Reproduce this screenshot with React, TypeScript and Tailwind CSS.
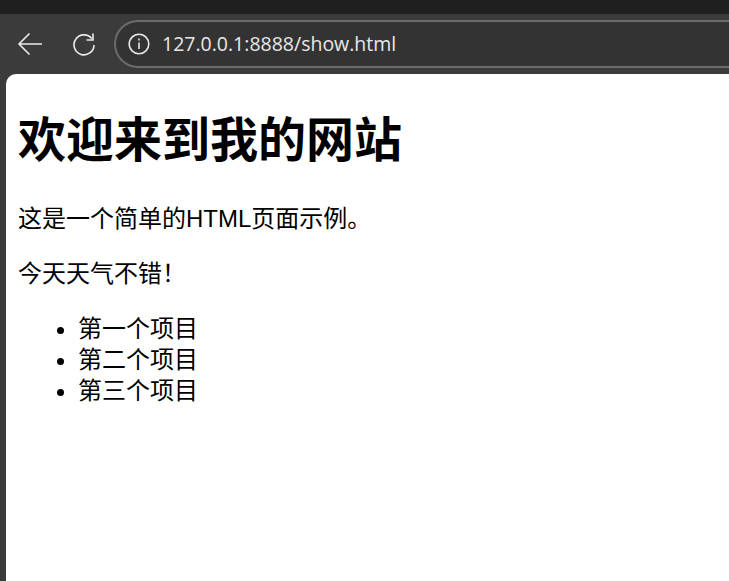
import React from 'react';

const cjk = "font-['Liberation_Sans','Noto_Sans_CJK_SC',sans-serif]";

const BackIcon = () => (
  <svg width="26" height="24" viewBox="0 0 26 24" fill="none" stroke="#ebebeb" strokeWidth="1.6">
    <path d="M25 12H2M12.5 1.5 2 12l10.5 10.5" />
  </svg>
);

const ReloadIcon = () => (
  <svg width="24" height="24" viewBox="0 0 24 24" fill="none" stroke="#ebebeb" strokeWidth="1.6">
    <path d="M19.8 6.6A10 10 0 1 0 22 13" />
    <path d="M21 1.5v6.5h-6.5" />
  </svg>
);

const InfoIcon = () => (
  <svg width="22" height="22" viewBox="0 0 22 22" fill="none" stroke="#e6e6e6" strokeWidth="1.6">
    <circle cx="11" cy="11" r="9.8" />
    <path d="M11 9.5v6.5M11 5.6v2" />
  </svg>
);

const Toolbar = () => (
  <div className="h-[60px] flex items-center bg-[#3b3b3b] pl-[17px]">
    <BackIcon />
    <div className="ml-[29px]">
      <ReloadIcon />
    </div>
    <div className="ml-[18px] h-[48px] flex-1 flex items-center bg-[#333333] border-2 border-r-0 border-[#6b6b6b] rounded-l-[24px] pl-[12px]">
      <InfoIcon />
      <span className="ml-[12px] text-[19.5px] text-[#e8e8e8] font-['Open_Sans',sans-serif]">127.0.0.1:8888/show.html</span>
    </div>
  </div>
);

export default function App() {
  return (
    <div className={`h-[581px] w-[729px] overflow-hidden flex flex-col bg-[#3b3b3b] ${cjk}`}>
      <div className="h-[14px] bg-[#1f1f1f]" />
      <Toolbar />
      <div className="flex-1 ml-[6px] bg-white rounded-tl-[10px] px-[12px] pt-[36px] text-black text-[24px] leading-[31px]">
        <h1 className="text-[48px] leading-[62px] font-bold">欢迎来到我的网站</h1>
        <p className="mt-[31px]">这是一个简单的HTML页面示例。</p>
        <p className="mt-[24px]">今天天气不错！</p>
        <ul className="mt-[24px] pl-[60px] list-disc">
          <li>第一个项目</li>
          <li>第二个项目</li>
          <li>第三个项目</li>
        </ul>
      </div>
    </div>
  );
}
